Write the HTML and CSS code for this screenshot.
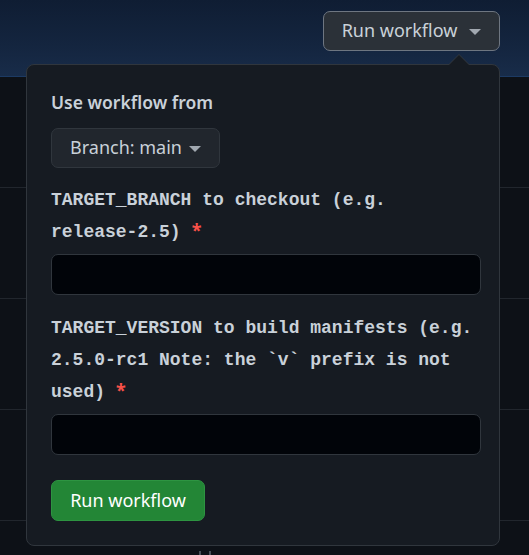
FILE: index.html
```html
<!DOCTYPE html>
<html>
<head>
<meta charset="utf-8">
<link rel="stylesheet" href="styles.css">
</head>
<body>
<header class="header">
  <button class="btn-top">Run workflow <span class="caret"></span></button>
</header>
<div class="rows">
  <div class="row"></div>
  <div class="row"></div>
  <div class="row"></div>
  <div class="row"></div>
  <div class="row last"><span class="stub"></span></div>
</div>
<div class="popup">
  <div class="heading">Use workflow from</div>
  <button class="btn-branch">Branch: main <span class="caret"></span></button>
  <label class="label first">TARGET_BRANCH to checkout (e.g. release-2.5)<span class="req">*</span></label>
  <div class="input"></div>
  <label class="label second">TARGET_VERSION to build manifests (e.g. 2.5.0-rc1 Note: the `v` prefix is not used)<span class="req">*</span></label>
  <div class="input"></div>
  <button class="btn-run">Run workflow</button>
</div>
</body>
</html>
```
FILE: styles.css
```css
html, body {
  margin: 0;
  padding: 0;
}
body {
  width: 529px;
  height: 555px;
  overflow: hidden;
  background: #0d1117;
  font-family: "Noto Sans", "Open Sans", sans-serif;
  color: #c9d1d9;
  position: relative;
}
.header {
  height: 77px;
  border-bottom: 1px solid #1c3a63;
  background: linear-gradient(180deg, #0f1d33 0%, #14253f 60%, #182c49 100%);
  display: flex;
  justify-content: flex-end;
  align-items: flex-start;
  padding: 11px 29px 0 0;
  box-sizing: border-box;
}
.btn-top {
  height: 40px;
  width: 177px;
  box-sizing: border-box;
  border: 1px solid #6e7681;
  border-radius: 7px;
  background: #2b3138;
  color: #c9d1d9;
  font-family: inherit;
  font-size: 18px;
  display: flex;
  align-items: center;
  justify-content: center;
  gap: 12px;
  padding: 0 0 2px;
}
.caret {
  display: inline-block;
  width: 0;
  height: 0;
  border-left: 6px solid transparent;
  border-right: 6px solid transparent;
  border-top: 6px solid #a1a8b0;
  margin-top: 3px;
}
.rows {
  display: flex;
  flex-direction: column;
}
.row {
  height: 110px;
  border-bottom: 1px solid #21262d;
  flex: none;
}
.row.last {
  height: 34px;
  border-bottom: none;
  position: relative;
}
.stub {
  position: absolute;
  left: 199px;
  top: 30px;
  width: 12px;
  height: 4px;
  border-left: 2px solid #484f58;
  border-right: 2px solid #484f58;
  box-sizing: border-box;
}
.popup {
  position: absolute;
  left: 26px;
  top: 64px;
  width: 474px;
  height: 482px;
  box-sizing: border-box;
  background: #161b22;
  border: 1px solid #30363d;
  border-radius: 8px;
  padding: 25px 24px 24px 24px;
  display: flex;
  flex-direction: column;
  align-items: flex-start;
}
.popup::before {
  content: "";
  position: absolute;
  top: -11px;
  left: 421px;
  width: 0;
  height: 0;
  border-left: 11px solid transparent;
  border-right: 11px solid transparent;
  border-bottom: 11px solid #30363d;
}
.popup::after {
  content: "";
  position: absolute;
  top: -10px;
  left: 422px;
  width: 0;
  height: 0;
  border-left: 10px solid transparent;
  border-right: 10px solid transparent;
  border-bottom: 10px solid #161b22;
}
.heading {
  font-size: 17.5px;
  font-weight: 600;
  line-height: 24px;
  color: #c9d1d9;
}
.btn-branch {
  margin-top: 14px;
  height: 40px;
  width: 169px;
  box-sizing: border-box;
  border: 1px solid #30363d;
  border-radius: 7px;
  background: #21262d;
  color: #c9d1d9;
  font-family: inherit;
  font-size: 18px;
  display: flex;
  align-items: center;
  justify-content: center;
  gap: 7px;
  padding: 0 0 2px;
}
.label {
  display: block;
  margin-top: 16px;
  font-family: "Liberation Mono", monospace;
  font-weight: 700;
  font-size: 18px;
  line-height: 32px;
  color: #c9d1d9;
  width: 430px;
}
.label.second {
  margin-top: 17px;
}
.req {
  color: #f85149;
  font-family: "Noto Sans", sans-serif;
  line-height: 1;
  margin-left: 11px;
}
.input {
  margin-top: 6px;
  width: 430px;
  height: 41px;
  box-sizing: border-box;
  background: #010409;
  border: 1px solid #30363d;
  border-radius: 7px;
}
.btn-run {
  margin-top: 25px;
  height: 41px;
  width: 154px;
  box-sizing: border-box;
  border: 1px solid #2d9441;
  border-radius: 7px;
  background: #238636;
  color: #ffffff;
  font-family: inherit;
  font-size: 18px;
  padding: 0 0 2px;
}
```
